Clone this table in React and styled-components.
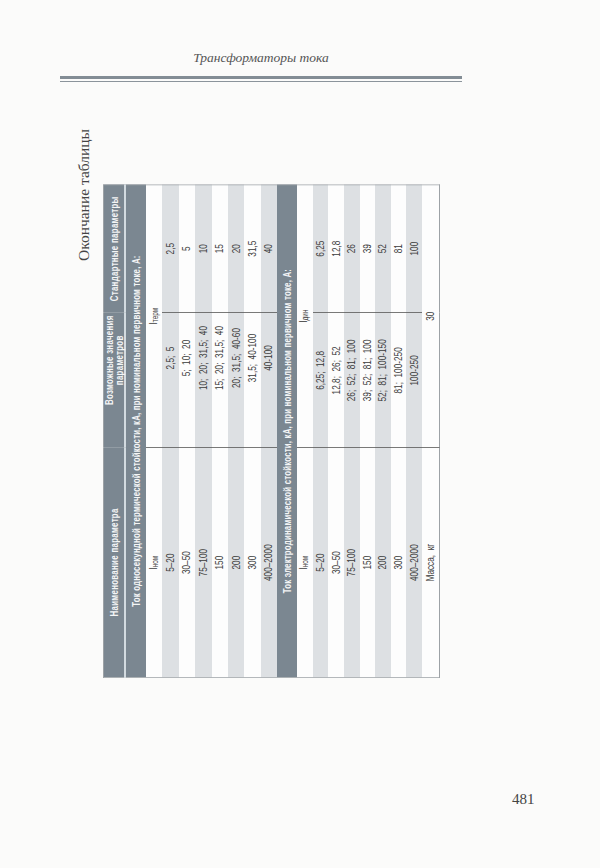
import React from "react";
import styled, { createGlobalStyle } from "styled-components";

// table is drawn upright, then squeezed along its width and turned on its side
const SCALE = 0.75;
const TABLE_W = 493;
const TABLE_H = 339;
const COLS = [230, 135, 128];

const thermal = [
  ["5–20", "2,5; 5", "2,5"],
  ["30–50", "5; 10; 20", "5"],
  ["75–100", "10; 20; 31,5; 40", "10"],
  ["150", "15; 20; 31,5; 40", "15"],
  ["200", "20; 31,5; 40-60", "20"],
  ["300", "31,5; 40-100", "31,5"],
  ["400–2000", "40-100", "40"],
];

const dynamic = [
  ["5–20", "6,25; 12,8", "6,25"],
  ["30–50", "12,8; 26; 52", "12,8"],
  ["75–100", "26; 52; 81; 100", "26"],
  ["150", "39; 52; 81; 100", "39"],
  ["200", "52; 81; 100-150", "52"],
  ["300", "81; 100-250", "81"],
  ["400–2000", "100-250", "100"],
];

const GlobalStyle = createGlobalStyle`
  html, body {
    margin: 0;
    padding: 0;
    background: #fbfbfa;
  }
  body {
    font-family: "Liberation Serif", "Times New Roman", serif;
  }
`;

const Page = styled.div`
  width: 600px;
  min-height: 868px;
  box-sizing: border-box;
  padding: 49px 0 0 60px;
`;

const RunningHead = styled.header`
  width: 402px;
`;

const HeadTitle = styled.div`
  font-style: italic;
  font-size: 13.5px;
  line-height: 18px;
  color: #555;
  text-align: center;
`;

const Rule = styled.div`
  margin-top: 9px;
  height: 2px;
  border-top: 3px solid #838d95;
  border-bottom: 1px solid #8b949b;
`;

const Spread = styled.div`
  display: flex;
  align-items: flex-start;
`;

const CaptionBox = styled.div`
  flex: none;
  width: 20px;
  height: 134px;
  margin: 46px 0 0 14px;
`;

const Caption = styled.div`
  width: 134px;
  height: 20px;
  line-height: 20px;
  font-size: 15.5px;
  color: #444;
  text-align: center;
  white-space: nowrap;
  transform-origin: 0 0;
  transform: translateY(134px) rotate(-90deg);
`;

const TableBox = styled.div`
  flex: none;
  width: ${TABLE_H}px;
  height: ${TABLE_W}px;
  margin: 103px 0 0 9px;
`;

const TableTurn = styled.div`
  width: ${TABLE_W / SCALE}px;
  transform-origin: 0 0;
  transform: translateY(${TABLE_W}px) rotate(-90deg) scaleX(${SCALE});
`;

const Table = styled.table`
  width: 100%;
  border-collapse: collapse;
  table-layout: fixed;
  border: 1px solid #9da2a6;
  font-family: "Liberation Sans", Arial, sans-serif;
  color: #3a3a3a;
`;

const HeadRow = styled.tr`
  height: 21px;
  background: #7b8791;
  border-bottom: 2px solid #d3dbe0;
`;

const HeadCell = styled.th`
  padding: 0 0 0 ${(p) => p.$shift || 0}px;
  font-size: 10.5px;
  line-height: 10px;
  letter-spacing: 0.4px;
  font-weight: bold;
  color: #f4f5f6;
  text-align: center;
  vertical-align: middle;
`;

const SectionRow = styled.tr`
  height: ${(p) => p.$h}px;
  background: #7b8791;
`;

const SectionCell = styled.td`
  padding: 0;
  font-size: 10.5px;
  line-height: 10px;
  letter-spacing: 0.25px;
  font-weight: bold;
  color: #f4f5f6;
  text-align: center;
  vertical-align: middle;
  white-space: nowrap;
`;

const Row = styled.tr`
  height: ${(p) => p.$h}px;
  background: ${(p) => (p.$shade ? "#dde0e3" : "#fdfdfd")};
`;

const Cell = styled.td`
  padding: 0 0 0 ${(p) => p.$shift || 0}px;
  font-size: 11px;
  line-height: 11px;
  word-spacing: 3px;
  text-align: center;
  vertical-align: middle;
  white-space: nowrap;
  border-left: ${(p) => (p.$rule ? "1px solid #4d4d4d" : "none")};
`;

const Sub = styled.sub`
  font-size: 8.5px;
  vertical-align: -1px;
`;

const PageNumber = styled.div`
  margin: 112px 0 0 452px;
  font-size: 15px;
  line-height: 18px;
  color: #444;
`;

const Section = ({ title, titleH, symbol, rows, rowH, shift, mass }) => (
  <>
    <SectionRow $h={titleH}>
      <SectionCell colSpan={3}>{title}</SectionCell>
    </SectionRow>
    <Row $h={rowH}>
      <Cell>
        I<Sub>ном</Sub>
      </Cell>
      <Cell colSpan={2} $rule>
        I<Sub>{symbol}</Sub>
      </Cell>
    </Row>
    {rows.map((r, i) => (
      <Row key={r[0]} $h={rowH} $shade={i % 2 === 0}>
        <Cell>{r[0]}</Cell>
        <Cell $rule $shift={shift}>
          {r[1]}
        </Cell>
        <Cell $rule>{r[2]}</Cell>
      </Row>
    ))}
    {mass && (
      <Row $h={18}>
        <Cell>Масса, кг</Cell>
        <Cell colSpan={2} $rule>
          {mass}
        </Cell>
      </Row>
    )}
  </>
);

export default function App() {
  return (
    <>
      <GlobalStyle />
      <Page>
        <RunningHead>
          <HeadTitle>Трансформаторы тока</HeadTitle>
          <Rule />
        </RunningHead>
        <Spread>
          <CaptionBox>
            <Caption>Окончание таблицы</Caption>
          </CaptionBox>
          <TableBox>
            <TableTurn>
              <Table>
                <colgroup>
                  {COLS.map((w, i) => (
                    <col key={i} style={{ width: w / SCALE }} />
                  ))}
                </colgroup>
                <thead>
                  <HeadRow>
                    <HeadCell>Наименование параметра</HeadCell>
                    <HeadCell $shift={53}>
                      Возможные значения
                      <br />
                      параметров
                    </HeadCell>
                    <HeadCell>Стандартные параметры</HeadCell>
                  </HeadRow>
                </thead>
                <tbody>
                  <Section
                    title="Ток односекундной термической стойкости, кА, при номинальном первичном токе, А:"
                    titleH={21}
                    symbol="терм"
                    rows={thermal}
                    rowH={16.4}
                    shift={59}
                  />
                  <Section
                    title="Ток электродинамической стойкости, кА, при номинальном первичном токе, А:"
                    titleH={20}
                    symbol="дин"
                    rows={dynamic}
                    rowH={15.6}
                    shift={26}
                    mass="30"
                  />
                </tbody>
              </Table>
            </TableTurn>
          </TableBox>
        </Spread>
        <PageNumber>481</PageNumber>
      </Page>
    </>
  );
}
